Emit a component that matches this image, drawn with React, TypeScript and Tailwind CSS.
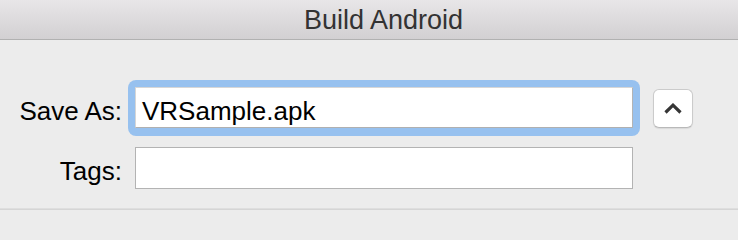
const font = {fontFamily: '"Liberation Sans", Arial, sans-serif'}

const ChevronUp = () => (
    <svg width="18" height="11" viewBox="0 0 18 11" fill="none">
        <polyline
            points="1.5,9.5 9,2.2 16.5,9.5"
            stroke="#363636"
            strokeWidth="3.2"
            strokeLinejoin="miter"
        />
    </svg>
)

export default function App() {
    return (
        <div
            className="w-[738px] h-[240px] bg-[#ececec] flex flex-col overflow-hidden"
            style={font}
        >
            <div className="h-[40px] shrink-0 bg-gradient-to-b from-[#e8e6e8] to-[#d2d0d2] border-b border-[#b1b1b1] flex items-center justify-center pl-[29px]">
                <span className="text-[27px] leading-[30px] text-[#333333] mt-[1px]">
                    Build Android
                </span>
            </div>

            <div className="flex flex-col pt-[40px]">
                <div className="flex items-center">
                    <label className="w-[122px] text-right text-[26px] leading-[28px] text-black pt-[6px]">
                        Save As:
                    </label>
                    <div className="ml-[6px] w-[512px] h-[56px] rounded-[8px] bg-[#97c1ef] p-[7px] pb-[8px]">
                        <div className="h-full bg-white border border-[#d6d6d6] border-b-[#b0b0b0] border-r-[#b4b4b4] flex items-center pl-[6px]">
                            <span className="text-[26px] leading-[28px] text-black pt-[6px]">
                                VRSample.apk
                            </span>
                        </div>
                    </div>
                    <button className="ml-[13px] w-[40px] h-[39px] rounded-[6px] bg-white border border-[#cbcbcb] border-b-[#b9b9b9] shadow-[0_1px_1px_rgba(0,0,0,0.08)] flex items-center justify-center">
                        <ChevronUp />
                    </button>
                </div>

                <div className="flex items-center mt-[11px]">
                    <label className="w-[122px] text-right text-[26px] leading-[28px] text-black pt-[6px]">
                        Tags:
                    </label>
                    <div className="ml-[13px] w-[498px] h-[42px] bg-white border border-[#b3b3b3]" />
                </div>
            </div>

            <div className="mt-[19px] h-[2px] bg-[#d5d5d5] border-t border-[#dedede]" />
        </div>
    )
}
